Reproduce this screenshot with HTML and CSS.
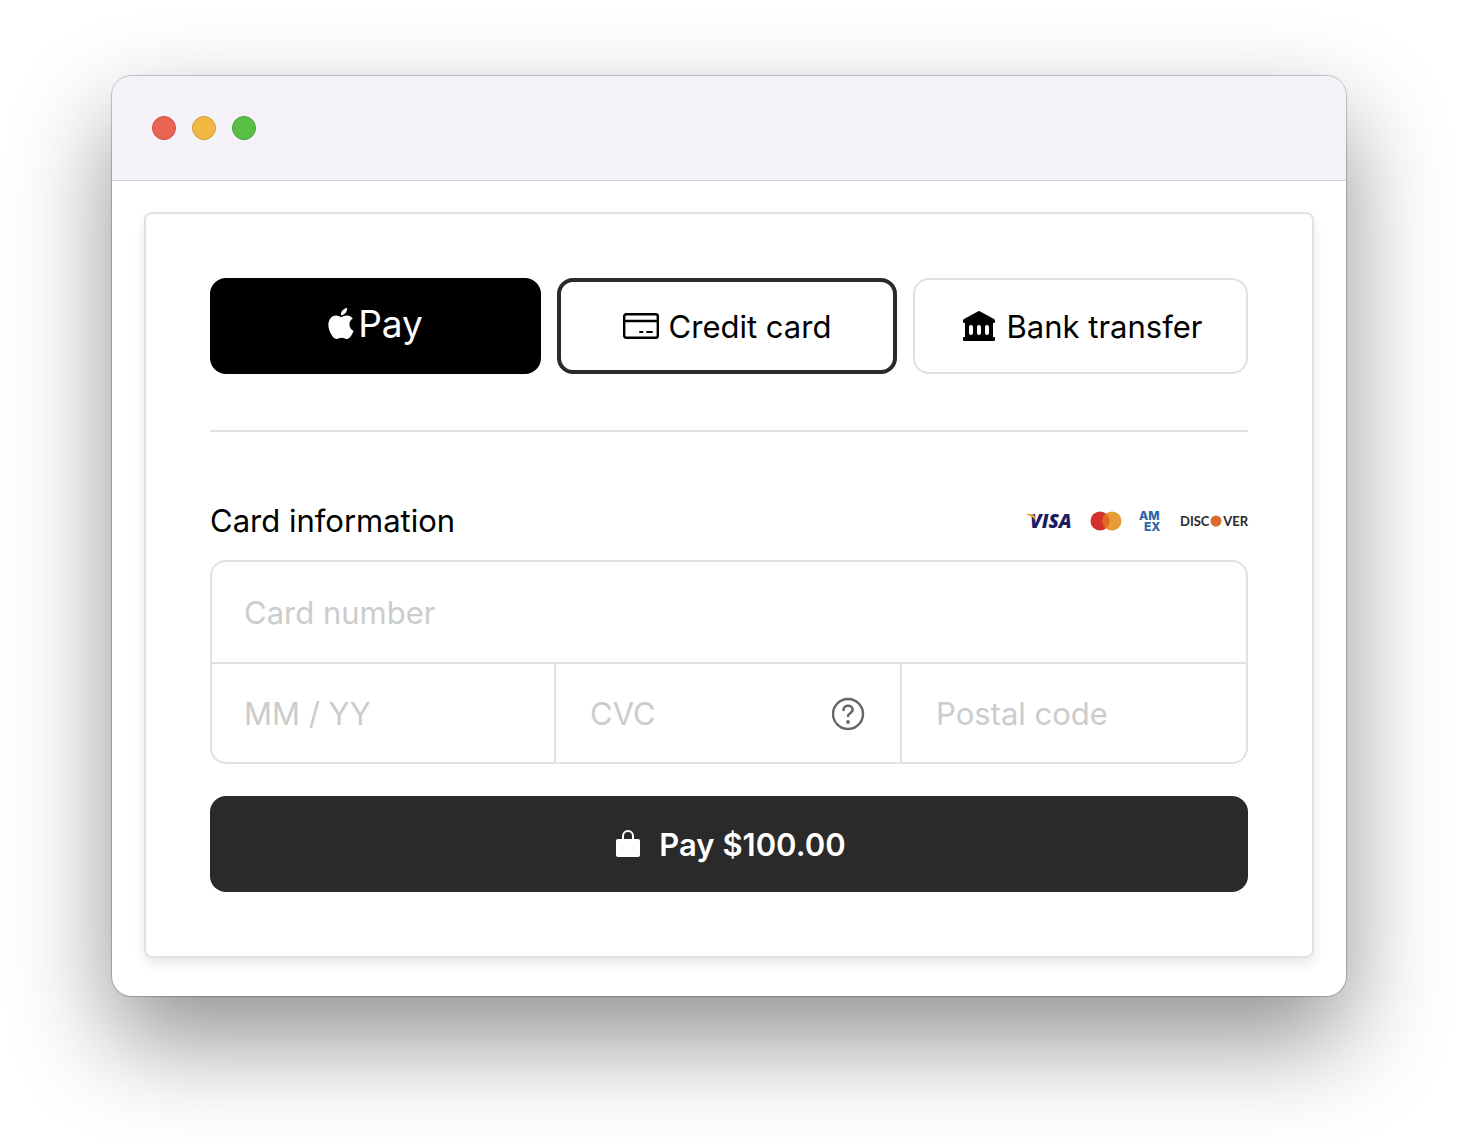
FILE: index.html
```html
<!DOCTYPE html>
<html lang="en">
<head>
<meta charset="utf-8">
<meta name="viewport" content="width=device-width, initial-scale=1">
<title>Checkout</title>
<link rel="stylesheet" href="styles.css">
</head>
<body>
<div class="window">
  <header class="titlebar">
    <span class="dot dot-close"></span>
    <span class="dot dot-minimize"></span>
    <span class="dot dot-zoom"></span>
  </header>
  <main class="content">
    <form class="card">
      <div class="methods">
        <button class="method method-apple" type="button" aria-label="Apple Pay">
          <svg width="26" height="31" viewBox="2 0 20 24" fill="currentColor" aria-hidden="true"><path d="M12.152 6.896c-.948 0-2.415-1.078-3.96-1.04-2.04.027-3.91 1.183-4.961 3.014-2.117 3.675-.546 9.103 1.519 12.09 1.013 1.454 2.208 3.09 3.792 3.039 1.52-.065 2.09-.987 3.935-.987 1.831 0 2.35.987 3.96.948 1.637-.026 2.676-1.48 3.676-2.948 1.156-1.688 1.636-3.325 1.662-3.415-.039-.013-3.182-1.221-3.22-4.857-.026-3.04 2.48-4.494 2.597-4.559-1.429-2.09-3.623-2.324-4.39-2.376-2-.156-3.675 1.09-4.61 1.09zM15.53 3.83c.843-1.012 1.4-2.427 1.245-3.83-1.207.052-2.662.805-3.532 1.818-.78.896-1.454 2.338-1.273 3.714 1.338.104 2.715-.688 3.559-1.701"/></svg>
          <span>Pay</span>
        </button>
        <button class="method method-selected" type="button" aria-pressed="true">
          <svg width="36" height="26" viewBox="0 0 36 26" fill="none" stroke="currentColor" stroke-width="2.400" aria-hidden="true"><rect x="1.200" y="1.200" width="33.600" height="23.600" rx="2"/><path d="M1 8h34"/><path d="M17 19h2.500M24 19h5" stroke-width="2" stroke-linecap="round"/></svg>
          <span>Credit card</span>
        </button>
        <button class="method" type="button">
          <svg width="32" height="31" viewBox="0 0 32 31" aria-hidden="true"><path fill="currentColor" fill-rule="evenodd" d="M14.800.400a2.500 2.500 0 0 1 2.400 0L31 8q1 .600 1 1.500V11q0 1-1 1h-1v14h1q1 0 1 1v2q0 1-1 1H1q-1 0-1-1v-2q0-1 1-1h1V12H1q-1 0-1-1V9.500q0-.900 1-1.500zM6 16v6q0 2 2 2t2-2v-6q0-2-2-2t-2 2zm8 0v6q0 2 2 2t2-2v-6q0-2-2-2t-2 2zm8 0v6q0 2 2 2t2-2v-6q0-2-2-2t-2 2z"/></svg>
          <span>Bank transfer</span>
        </button>
      </div>
      <hr class="divider">
      <div class="section-head">
        <h2 class="section-title" id="card-info">Card information</h2>
        <div class="brands">
          <svg width="46" height="20" viewBox="0 0 46 20" role="img" aria-label="Visa"><text class="visa" x="3" y="17">VISA</text><path fill="#e9a13b" d="M0 3h5q2 0 2.500 2l1 5Q6 5 0 4z"/></svg>
          <svg width="32" height="20" viewBox="0 0 32 20" role="img" aria-label="Mastercard"><circle cx="10" cy="10" r="9.500" fill="#d1322b"/><circle cx="22" cy="10" r="9.500" fill="#e79c38"/><path fill="#e56525" d="M16 2.600a9.500 9.500 0 0 1 0 14.800a9.500 9.500 0 0 1 0-14.800z"/></svg>
          <svg width="24" height="20" viewBox="0 0 24 20" role="img" aria-label="American Express"><text class="amex" x="0" y="9">AM</text><text class="amex" x="5" y="20">EX</text></svg>
          <svg width="68" height="20" viewBox="0 0 68 20" role="img" aria-label="Discover"><text class="discover" x="0" y="15">DISC</text><circle cx="36" cy="10" r="5.500" fill="#dd6b2d"/><text class="discover" x="68" y="15" text-anchor="end">VER</text></svg>
        </div>
      </div>
      <div class="fields" role="group" aria-labelledby="card-info">
        <div class="field field-number">
          <input type="text" inputmode="numeric" aria-label="Card number" placeholder="Card number">
        </div>
        <div class="field field-expiry">
          <input type="text" inputmode="numeric" aria-label="Expiry date" placeholder="MM / YY">
        </div>
        <div class="field">
          <input type="text" inputmode="numeric" aria-label="CVC" placeholder="CVC">
          <button class="help" type="button" aria-label="What is the CVC?">
            <svg width="34" height="34" viewBox="0 0 34 34" fill="none" stroke="currentColor" aria-hidden="true"><circle cx="16" cy="18" r="15" stroke-width="2.400"/><path stroke-width="2.600" stroke-linecap="round" d="M11.500 14c0-2.600 2-4.200 4.600-4.200s4.600 1.600 4.600 4c0 3.300-4.700 3.500-4.700 6.200"/><circle cx="16" cy="26" r="1.900" fill="currentColor" stroke="none"/></svg>
          </button>
        </div>
        <div class="field">
          <input type="text" aria-label="Postal code" placeholder="Postal code">
        </div>
      </div>
      <button class="pay" type="submit">
        <svg width="24" height="28" viewBox="0 0 24 28" aria-hidden="true"><rect y="9" width="24" height="18" rx="2" fill="currentColor"/><path d="M7 10V6a5 5 0 0 1 10 0v4" fill="none" stroke="currentColor" stroke-width="2"/></svg>
        <span>Pay $100.00</span>
      </button>
    </form>
  </main>
</div>
</body>
</html>
```
FILE: styles.css
```css
* {
  box-sizing: border-box;
}

body {
  margin: 0;
  padding: 76px 112px 148px;
  background: #fff;
  color: #000;
  font-family: Inter, "Liberation Sans", sans-serif;
  font-size: 31px;
  line-height: 40px;
}

button,
input {
  font: inherit;
  color: inherit;
}

.window {
  border-radius: 20px;
  background: #fff;
  box-shadow: 0 0 1px 1px rgba(0, 0, 0, 0.22), 0 44px 100px rgba(0, 0, 0, 0.44);
}

.titlebar {
  display: flex;
  align-items: center;
  gap: 16px;
  height: 105px;
  padding: 0 40px;
  border-bottom: 1px solid #d2d0d6;
  border-radius: 20px 20px 0 0;
  background: #f4f1f9;
}

.dot {
  width: 24px;
  height: 24px;
  border: 1px solid;
  border-radius: 50%;
}

.dot-close {
  background: #e96453;
  border-color: #cf4b3c;
}

.dot-minimize {
  background: #f2b842;
  border-color: #d39b32;
}

.dot-zoom {
  background: #59bf47;
  border-color: #43a233;
}

.content {
  padding: 31px 32px 38px;
}

.card {
  padding: 64px;
  border: 2px solid #e1e0e6;
  border-radius: 8px;
  box-shadow: 0 6px 12px rgba(0, 0, 0, 0.09);
}

.methods {
  display: grid;
  grid-template-columns: 331fr 340fr 335fr;
  gap: 16px;
}

.method {
  display: flex;
  align-items: center;
  justify-content: center;
  gap: 12px;
  height: 96px;
  padding: 0 0 0 4px;
  border: 2px solid #e1e0e6;
  border-radius: 16px;
  background: #fff;
  white-space: nowrap;
}

.method span,
.pay span {
  padding-top: 2px;
}

.method-apple {
  gap: 4px;
  padding: 0 0 6px;
  border-color: #000;
  background: #000;
  color: #fff;
  font-size: 37px;
}

.method-selected {
  gap: 10px;
  padding: 0;
  border: 4px solid #2a2a2a;
}

.divider {
  margin: 56px 0 0;
  border: 0;
  border-top: 2px solid #e1e0e6;
}

.section-head {
  display: flex;
  align-items: center;
  justify-content: space-between;
  margin: 69px 0 19px;
}

.section-title {
  margin: 0;
  font-size: 31px;
  font-weight: 400;
}

.brands {
  display: flex;
  gap: 17px;
}

.brands svg {
  overflow: visible;
}

.visa {
  fill: #1b1c63;
  font: italic 800 19px "Open Sans", sans-serif;
}

.amex {
  fill: #2f66a8;
  font: 800 12px Inter, sans-serif;
}

.discover {
  fill: #2a2a2a;
  font: 700 13px Lato, sans-serif;
}

.fields {
  display: grid;
  grid-template-columns: 344fr 346fr 344fr;
  border: 2px solid #e1e0e6;
  border-radius: 16px;
}

.field {
  display: flex;
  align-items: center;
  height: 98px;
  padding: 0 34px;
  border-right: 2px solid #e1e0e6;
}

.field:last-child {
  border-right: 0;
}

.field-number {
  grid-column: 1 / -1;
  height: 102px;
  padding: 0 32px;
  border-right: 0;
  border-bottom: 2px solid #e1e0e6;
}

.field-expiry {
  padding: 0 32px;
}

.field input {
  flex: 1;
  width: 100%;
  min-width: 0;
  padding: 2px 0 0;
  border: 0;
  outline: 0;
  background: none;
}

.field input::placeholder {
  color: #ccc;
  opacity: 1;
}

.help {
  display: flex;
  padding: 0;
  border: 0;
  background: none;
  color: #666;
}

.pay {
  display: flex;
  align-items: center;
  justify-content: center;
  gap: 19px;
  width: 100%;
  height: 96px;
  margin-top: 32px;
  padding: 0 0 0 4px;
  border: 0;
  border-radius: 16px;
  background: #2a2a2a;
  color: #fff;
  font-weight: 600;
}
```
